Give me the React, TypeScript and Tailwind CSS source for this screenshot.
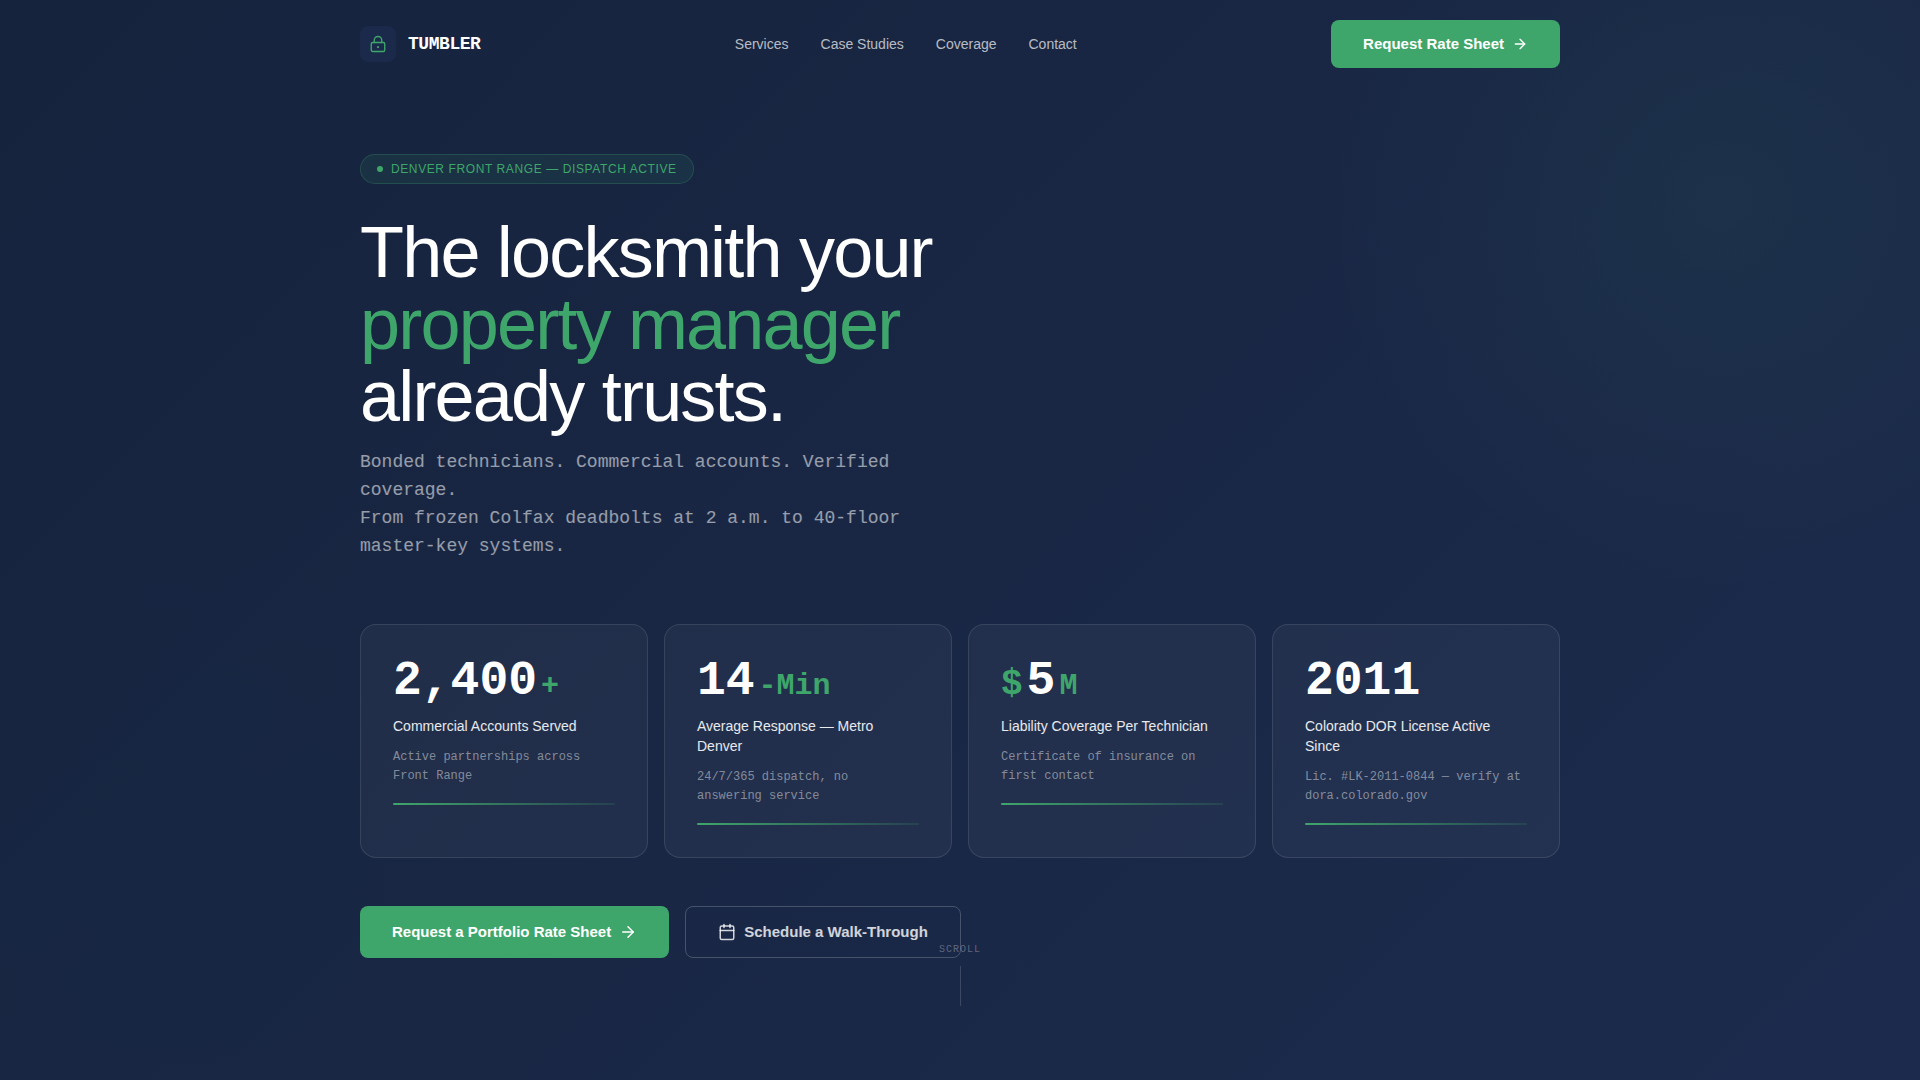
import React from 'react';
import { ArrowRight, Calendar } from 'lucide-react';

interface Stat {
  prefix?: string;
  value: string;
  suffix?: string;
  label: string;
  note: string;
}

const navLinks = ['Services', 'Case Studies', 'Coverage', 'Contact'];

const stats: Stat[] = [
  {
    value: '2,400',
    suffix: '+',
    label: 'Commercial Accounts Served',
    note: 'Active partnerships across Front Range',
  },
  {
    value: '14',
    suffix: '-Min',
    label: 'Average Response — Metro Denver',
    note: '24/7/365 dispatch, no answering service',
  },
  {
    prefix: '$',
    value: '5',
    suffix: 'M',
    label: 'Liability Coverage Per Technician',
    note: 'Certificate of insurance on first contact',
  },
  {
    value: '2011',
    label: 'Colorado DOR License Active Since',
    note: 'Lic. #LK-2011-0844 — verify at dora.colorado.gov',
  },
];

const LockMark: React.FC = () => (
  <svg
    viewBox="0 0 24 24"
    fill="none"
    stroke="currentColor"
    strokeWidth="1.8"
    strokeLinecap="round"
    strokeLinejoin="round"
    className="size-[18px] text-[#3fa66b]"
    aria-hidden="true"
  >
    <rect x="3" y="10" width="18" height="12" rx="2" />
    <path d="M7 10V7a5 5 0 0 1 10 0v3" />
    <circle cx="12" cy="16" r="1.5" fill="currentColor" stroke="none" />
  </svg>
);

const Header: React.FC = () => (
  <header className="px-6 py-5">
    <div className="mx-auto flex max-w-[1200px] items-center justify-between">
      <a href="#" className="flex items-center gap-3">
        <span className="flex size-9 items-center justify-center rounded-lg bg-[#1b2a4a]">
          <LockMark />
        </span>
        <span className="font-['Liberation_Mono',monospace] text-lg font-bold tracking-tight text-white">
          TUMBLER
        </span>
      </a>
      <nav className="flex items-center gap-8">
        {navLinks.map((link) => (
          <a key={link} href="#" className="text-sm text-white/70 hover:text-white">
            {link}
          </a>
        ))}
      </nav>
      <button
        type="button"
        className="flex h-12 items-center gap-2 rounded-lg bg-[#3fa66b] px-8 text-[15px] font-bold text-white"
      >
        Request Rate Sheet
        <ArrowRight size={16} />
      </button>
    </div>
  </header>
);

const StatCard: React.FC<{ stat: Stat }> = ({ stat }) => (
  <div className="rounded-2xl border border-white/10 bg-white/[0.04] p-8">
    <div className="mb-[11px] flex items-baseline gap-1 font-['Liberation_Mono',monospace] font-bold leading-none">
      {stat.prefix && <span className="text-4xl leading-none text-[#3fa66b]">{stat.prefix}</span>}
      <span className="text-5xl leading-none text-white">{stat.value}</span>
      {stat.suffix && <span className="text-3xl leading-none text-[#3fa66b]">{stat.suffix}</span>}
    </div>
    <p className="mb-3 text-sm text-white/90">{stat.label}</p>
    <p className="font-['Liberation_Mono',monospace] text-xs leading-[19px] text-white/45">{stat.note}</p>
    <div className="mt-[17px] h-0.5 rounded-full bg-linear-to-r from-[#3fa66b] to-[#3fa66b]/15" />
  </div>
);

const App: React.FC = () => (
  <div className="relative min-h-screen overflow-hidden bg-linear-135 from-[#16233d] to-[#1c2b4d] font-['Liberation_Sans',Arial,sans-serif]">
    {/* ambient glows */}
    <div className="pointer-events-none absolute -top-[200px] -right-[200px] size-[800px] rounded-full bg-[radial-gradient(circle,rgba(63,166,107,0.07),transparent_70%)]" />
    <div className="pointer-events-none absolute -bottom-20 -left-40 size-[640px] rounded-full bg-[radial-gradient(circle,rgba(20,38,64,0.4),transparent_70%)]" />

    <div className="relative">
      <Header />
      <main className="px-6 pt-[66px] pb-20">
        <div className="mx-auto max-w-[1200px]">
          <div className="flex w-fit items-center gap-2 rounded-full border border-[#3fa66b]/25 bg-[#3fa66b]/10 px-4 py-1.5">
            <span className="size-1.5 rounded-full bg-[#3fa66b]" />
            <span className="text-xs tracking-wider text-[#3fa66b] uppercase">
              Denver Front Range — Dispatch Active
            </span>
          </div>

          <h1 className="mt-8 text-7xl leading-none tracking-tight text-white">
            The locksmith your
            <br />
            <span className="text-[#3fa66b]">property manager</span>
            <br />
            already trusts.
          </h1>
          <p className="mt-4 max-w-xl font-['Liberation_Mono',monospace] text-lg leading-7 text-white/55">
            Bonded technicians. Commercial accounts. Verified coverage.
            <br />
            From frozen Colfax deadbolts at 2 a.m. to 40-floor master-key systems.
          </p>

          <section className="mt-16 grid grid-cols-4 gap-4">
            {stats.map((stat) => (
              <StatCard key={stat.label} stat={stat} />
            ))}
          </section>

          <div className="mt-12 flex gap-4 text-[15px] font-bold">
            <button
              type="button"
              className="flex h-[52px] items-center gap-2 rounded-lg bg-[#3fa66b] px-8 text-white"
            >
              Request a Portfolio Rate Sheet
              <ArrowRight size={18} />
            </button>
            <button
              type="button"
              className="flex h-[52px] items-center gap-2 rounded-lg border border-white/20 px-8 text-white/80"
            >
              <Calendar size={18} />
              Schedule a Walk-Through
            </button>
          </div>
        </div>
      </main>

      {/* scroll cue */}
      <div className="pointer-events-none absolute inset-x-0 bottom-8 flex flex-col items-center gap-2">
        <span className="font-['Liberation_Mono',monospace] text-[10px] leading-4 tracking-widest text-white/30">
          SCROLL
        </span>
        <span className="h-10 w-px bg-white/15" />
      </div>
    </div>
  </div>
);

export default App;
